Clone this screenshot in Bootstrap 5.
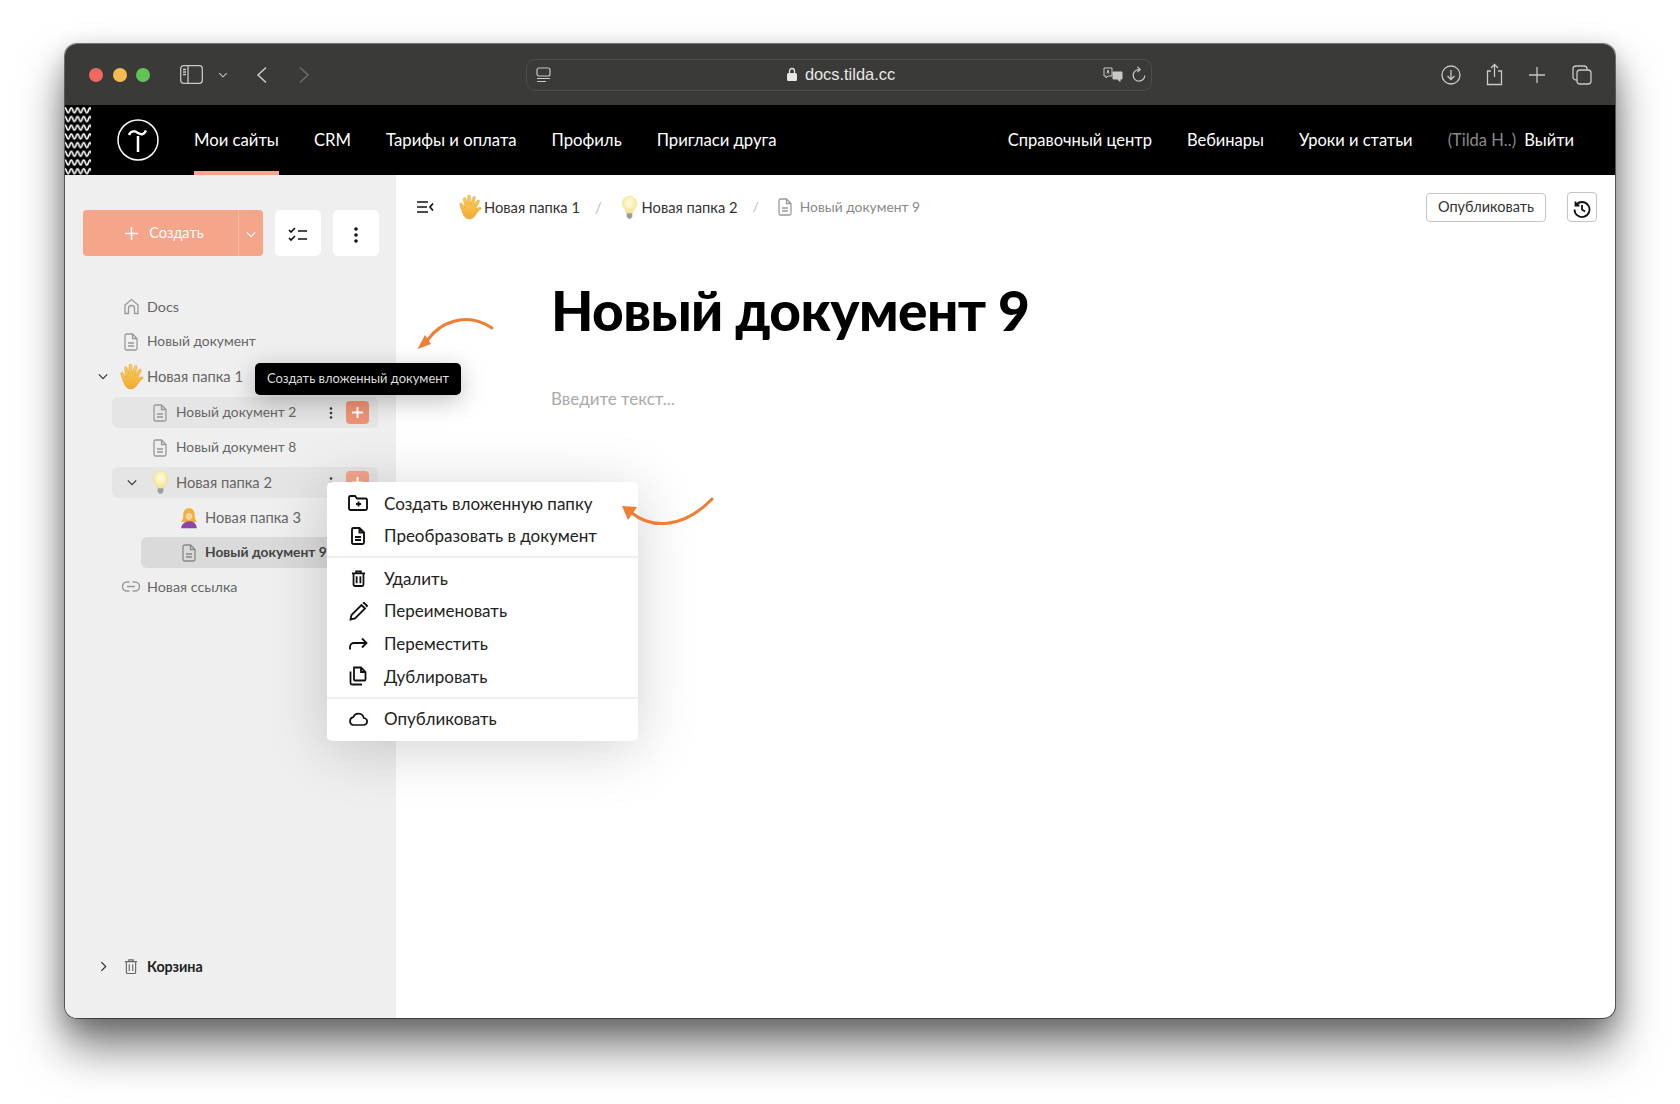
<!DOCTYPE html>
<html lang="ru">
<head>
    <meta charset="UTF-8">
    <title>docs.tilda.cc</title>
    <link href="https://cdn.jsdelivr.net/npm/bootstrap@5.3.2/dist/css/bootstrap.min.css" rel="stylesheet">
    <style>
        html, body { height: 1104px; }
        body { background: #fff; font-family: "Lato", "Noto Sans", sans-serif; color: #111; padding: 44px 0 0 65px; }
        .app-window { width: 1550px; height: 974px; border-radius: 12px; box-shadow: 0 0 0 1px rgba(0,0,0,.5), 0 30px 46px rgba(0,0,0,.5), 0 8px 24px rgba(0,0,0,.25); position: relative; }
        .win-frame { height: 100%; position: relative; border-radius: 12px; overflow: hidden; }

        .title-bar { height: 61px; background: #3a3a38; padding-left: 24px; color: #c8c8c6; flex: none; }
        .light { width: 14px; height: 14px; border-radius: 50%; margin-right: 9.500px; }
        .url-bar { width: 626px; height: 32px; border: 1px solid #4d4d4b; border-radius: 9px; margin-left: 216px; padding: 0 5px 0 9px; font-family: "Liberation Sans", sans-serif; font-size: 16.400px; color: #e8e8e6; }
        .url-center { flex: 1; justify-content: center; padding-left: 30px; }

        .top-nav { height: 70px; background: #000; flex: none; }
        .wave-strip { width: 26px; height: 70px; flex: none; }
        .top-link { color: #fff; font-size: 16.500px; line-height: 70px; height: 70px; text-decoration: none; white-space: nowrap; display: block; }
        .left-links .top-link { font-size: 16.700px; }
        .top-link.current { box-shadow: inset 0 -4px 0 #f4a58a; }
        .top-nav .nav { gap: 35px; }
        .muted-user { color: #8a8a8a; margin-right: 4px; }

        .side-panel { width: 331px; background: #efefef; padding: 35px 0 36px 18px; flex: none; }
        .create-group { width: 180px; height: 46px; }
        .create-group .btn { background: #f4a58a; color: #fff; border: 0; font-size: 14.500px; border-radius: 4px; }
        .create-group .btn:first-child { padding: 0 12px 0 19px; gap: 11px; }
        .create-group .btn + .btn { border-left: 1px solid #f7b8a2; flex: 0 0 25px; padding: 0; }
        .tool-btn { width: 46px; height: 46px; background: #fff; border: 0; border-radius: 5px; padding: 0; margin-left: 12px; }

        .doc-tree { margin-top: 35px; width: 295px; }
        .tree-row { height: 31px; margin-bottom: 4px; padding-left: 13px; border-radius: 6px; font-size: 14.300px; color: #666; white-space: nowrap; position: relative; }
        .tree-row.lvl-1 { margin-left: 29px; }
        .tree-row.lvl-2 { margin-left: 58px; }
        .tree-row.hovered { background: #e5e5e5; }
        .tree-row.picked { background: #dadada; color: #444; font-weight: 700; margin-bottom: 3px; }
        .tree-row.open-folder { margin-bottom: 5px; }
        .tree-row.sub-folder { margin-top: 4px; }
        .name-doc { font-size: 13.800px; }
        .name-folder { font-size: 14.700px; }
        .chev-slot { width: 14px; flex: none; line-height: 0; text-align: center; }
        .icon-slot { width: 18px; margin-left: 12px; margin-right: 7px; flex: none; display: flex; justify-content: center; }
        .row-tools { position: absolute; right: 9px; top: 4px; gap: 13px; }
        .add-mini { width: 23px; height: 23px; border-radius: 4px; background: #ee9374; color: #fff; }
        .add-mini.faded { background: #f4a58a; }
        .trash-row { height: 31px; margin-top: auto; padding-left: 13px; font-size: 14.300px; font-weight: 700; color: #222; }
        .thin-ic { stroke-width: 1.300; }
        .bold-ic { stroke-width: 1.900; }

        .hint-box { position: absolute; left: 190px; top: 319px; width: 206px; height: 32px; background: #000; color: #ddd; border-radius: 5px; font-size: 12.900px; box-shadow: 0 6px 24px rgba(0,0,0,.25); z-index: 5; }
        .tree-menu.dropdown-menu { position: absolute; display: block; left: 262px; top: 438px; width: 311px; height: 259px; padding: 5px 0 0; border: 0; border-radius: 5px; box-shadow: 0 8px 60px rgba(0,0,0,.18); z-index: 6; }
        .tree-menu .dropdown-item { height: 32.600px; padding: 0 0 0 19px; display: flex; align-items: center; font-size: 17px; color: #222; }
        .tree-menu .dropdown-divider { margin: 4px 0 4px; border-color: #efefef; border-width: 2px; }
        .menu-icon { width: 24px; margin-right: 14px; display: flex; justify-content: center; }

        .main-pane { position: relative; min-width: 0; }
        .crumb-bar { height: 30px; margin-top: 17px; padding: 0 18px 0 21px; }
        .crumb-bar .breadcrumb { margin: 0 0 0 24px; font-size: 14.700px; --bs-breadcrumb-item-padding-x: 15px; align-items: center; }
        .crumb-bar .breadcrumb-item { display: flex; align-items: center; gap: 4px; color: #333; }
        .crumb-bar .breadcrumb-item.active { font-size: 13.800px; color: #888; }
        .crumb-bar .breadcrumb-item + .breadcrumb-item::before { color: #bbb; }
        .hand-crumb { margin-right: -2px; }
        .publish-btn { width: 120px; height: 29px; padding: 0; font-size: 14.500px; border: 1px solid #c4c4c4; border-radius: 4px; color: #333; background: #fff; }
        .history-btn { width: 30px; height: 30px; padding: 0; border: 1px solid #c4c4c4; border-radius: 4px; background: #fff; margin-left: 21px; }
        .doc-title { font-size: 55px; font-weight: 900; line-height: 1; margin: 61px 0 0 155px; color: #000; letter-spacing: -.6px; }
        .doc-placeholder { font-size: 17px; color: #aaa; margin: 48px 0 0 155px; }
        .note-arrow { position: absolute; z-index: 7; overflow: visible; }
    </style>
</head>
<body>

<svg width="0" height="0" class="position-absolute">
    <defs>
        <pattern id="waves" width="12.500" height="8.700" patternUnits="userSpaceOnUse" y="1">
            <path d="M-3.125 4.300C-1.500 1.800 0 1.800 0 1.800C1.600 1.800 1.600 6.800 3.125 6.800S4.700 1.800 6.250 1.800 7.800 6.800 9.375 6.800 11 1.800 12.500 1.800 14 6.800 15.625 6.800" fill="none" stroke="#fff" stroke-width="1.700"/>
        </pattern>
        <radialGradient id="bulb-glow" cx=".5" cy=".4" r=".6">
            <stop offset="0" stop-color="#fffef0"/>
            <stop offset="1" stop-color="#f8e27e"/>
        </radialGradient>
        <linearGradient id="hand-shade" x1="0" y1="0" x2="0" y2="1">
            <stop offset="0" stop-color="#fbd25a"/>
            <stop offset="1" stop-color="#f1a935"/>
        </linearGradient>
        <symbol id="ic-doc" viewBox="0 0 14 18"><path d="M1 2.500A1.500 1.500 0 0 1 2.500 1H8.500L13 5.500V15.500A1.500 1.500 0 0 1 11.500 17H2.500A1.500 1.500 0 0 1 1 15.500ZM8.500 1V5.500H13M4 10H10M4 13H10" fill="none" stroke="currentColor"/></symbol>
        <symbol id="ic-trash" viewBox="0 0 16 18"><path d="M1 3.500H15M5.500 3.500V1.500H10.500V3.500M2.700 3.500V15.500A1.500 1.500 0 0 0 4.200 17H11.800A1.500 1.500 0 0 0 13.300 15.500V3.500M6 6.500V14M10 6.500V14" fill="none" stroke="currentColor"/></symbol>
        <symbol id="ic-down" viewBox="0 0 12 8"><path d="M1 1.500L6 6.500L11 1.500" fill="none" stroke="currentColor" stroke-width="1.400"/></symbol>
        <symbol id="em-hand" viewBox="0 0 24 26"><path d="M7 14L5.300 5.200C5 3.400 7.300 3 7.800 4.700L9.600 10.500L9.700 2.500C9.700.6 12.200.6 12.300 2.500L12.800 10.300L14.900 3.300C15.400 1.600 17.800 2.200 17.300 4L15.600 11.200L19.200 6.500C20.300 5.200 22.200 6.400 21.300 7.900L17.500 14.500C19 14.200 21 13 22.600 13.500 23.500 13.900 23.300 14.800 22.500 15.300 20 16.800 18.500 19.500 16.800 22 14.500 25.500 10 25.800 7.500 23.500 4.500 20.800 3.600 15.500 1.800 10.800 1.200 9 3.500 8.300 4.200 10Z" fill="url(#hand-shade)" stroke="#e29a2c" stroke-width=".5"/></symbol>
        <symbol id="em-bulb" viewBox="0 0 18 26"><path d="M9 1A7.700 7.700 0 0 0 1.300 8.700C1.300 12.500 4.800 14.500 5.800 19H12.200C13.200 14.500 16.700 12.500 16.700 8.700A7.700 7.700 0 0 0 9 1Z" fill="url(#bulb-glow)" stroke="#f1dc8b" stroke-width=".5"/><path d="M6 19.200H12V22.500L10.200 25H7.800L6 22.500Z" fill="#9c9c9c"/></symbol>
        <symbol id="em-woman" viewBox="0 0 22 26"><path d="M11 1C5 1 4 6 4 10C4 14 2.500 16.500 1.500 18H20.500C19.500 16.500 18 14 18 10C18 6 17 1 11 1Z" fill="#eeb13c"/><path d="M11 6.500C8.500 6.500 7 8.500 7 11S8.800 15.500 11 15.500 15 13.500 15 11 13.500 6.500 11 6.500Z" fill="#f9cf9f"/><path d="M1.500 25.500C1.500 20.500 5.500 18 11 17S20.500 20.500 20.500 25.500Z" fill="#8e45a8"/></symbol>
    </defs>
</svg>

<div class="app-window">
    <div class="win-frame d-flex flex-column">

        <div class="title-bar d-flex align-items-center">
            <span class="light" style="background:#ee6a5f"></span>
            <span class="light" style="background:#f5bd4f"></span>
            <span class="light" style="background:#61c454"></span>
            <svg style="margin-left:20px" width="23" height="19" viewBox="0 0 23 19" fill="none" stroke="#c8c8c6" stroke-width="1.300"><rect x=".7" y=".7" width="21.600" height="17.600" rx="3"/><path d="M8 .7V18.300M3 4.500H6M3 7H6M3 9.500H6"/></svg>
            <svg width="10" height="6" viewBox="0 0 12 8" style="color:#c8c8c6;margin-left:15px"><use href="#ic-down"/></svg>
            <svg width="12" height="18" viewBox="0 0 12 18" fill="none" stroke="#c8c8c6" stroke-width="1.600" style="margin-left:28px"><path d="M10 1.500L2 9L10 16.500"/></svg>
            <svg width="12" height="18" viewBox="0 0 12 18" fill="none" stroke="#6a6a68" stroke-width="1.600" style="margin-left:30px"><path d="M2 1.500L10 9L2 16.500"/></svg>

            <div class="url-bar d-flex align-items-center">
                <svg width="15" height="16" viewBox="0 0 15 16" fill="none" stroke="#c8c8c6" stroke-width="1.200"><rect x="1" y="1" width="13" height="8" rx="2"/><path d="M1 11.500H14M1 14.500H10"/></svg>
                <div class="url-center d-flex align-items-center gap-2">
                    <svg width="10" height="14" viewBox="0 0 10 14"><path d="M2.500 6V4A2.500 2.500 0 0 1 7.500 4V6" fill="none" stroke="#e8e8e6" stroke-width="1.300"/><rect y="6" width="10" height="8" rx="1.500" fill="#e8e8e6"/></svg>
                    <span>docs.tilda.cc</span>
                </div>
                <svg width="22" height="16" viewBox="0 0 22 16" fill="none" stroke="#c8c8c6" stroke-width="1"><path d="M2 1H10V9H6L4 11V9H2ZM5 6.500L6 3L7 6.500"/><path d="M11 5H20V12H18V14.500L15.500 12H11Z" fill="#c8c8c6"/></svg>
                <svg class="ms-2" width="14" height="17" viewBox="0 0 14 17" fill="none" stroke="#c8c8c6" stroke-width="1.200"><path d="M7 3.500A5.800 5.800 0 1 0 12.800 9.500M5.500 .8L8.200 3.500L5.500 6"/></svg>
            </div>

            <svg width="20" height="20" viewBox="0 0 20 20" fill="none" stroke="#c8c8c6" stroke-width="1.300" style="margin-left:289px"><circle cx="10" cy="10" r="9"/><path d="M10 5V14.500M6.500 11L10 14.500L13.500 11"/></svg>
            <svg width="17" height="23" viewBox="0 0 17 23" fill="none" stroke="#c8c8c6" stroke-width="1.300" style="margin-left:25px"><path d="M5 8H1.500V21.500H15.500V8H12M8.500 14V1.500M5 5L8.500 1.500L12 5"/></svg>
            <svg width="16" height="16" viewBox="0 0 16 16" fill="none" stroke="#c8c8c6" stroke-width="1.300" style="margin-left:26px"><path d="M8 0V16M0 8H16"/></svg>
            <svg width="20" height="20" viewBox="0 0 20 20" fill="none" stroke="#c8c8c6" stroke-width="1.300" style="margin-left:27px"><rect x="5" y="5" width="14" height="14" rx="3"/><path d="M5 15H4A3 3 0 0 1 1 12V4A3 3 0 0 1 4 1H12A3 3 0 0 1 15 4V5"/></svg>
        </div>

        <div class="top-nav d-flex align-items-center">
            <svg class="wave-strip"><rect width="26" height="70" fill="url(#waves)"/></svg>
            <svg width="42" height="42" viewBox="0 0 42 42" fill="none" stroke="#fff" stroke-width="1.500" style="margin-left:26px"><circle cx="21" cy="21" r="20"/><path d="M21 17V33" stroke-width="2.500"/><path d="M12 16C14 11 18 12 21 14S27 16 29 11.500" stroke-width="2.500"/></svg>
            <ul class="nav left-links" style="margin-left:35px">
                <li><a class="top-link current" href="#">Мои сайты</a></li>
                <li><a class="top-link" href="#">CRM</a></li>
                <li><a class="top-link" href="#">Тарифы и оплата</a></li>
                <li><a class="top-link" href="#">Профиль</a></li>
                <li><a class="top-link" href="#">Пригласи друга</a></li>
            </ul>
            <ul class="nav ms-auto" style="margin-right:41px">
                <li><a class="top-link" href="#">Справочный центр</a></li>
                <li><a class="top-link" href="#">Вебинары</a></li>
                <li><a class="top-link" href="#">Уроки и статьи</a></li>
                <li><a class="top-link" href="#"><span class="muted-user">(Tilda H..)</span> Выйти</a></li>
            </ul>
        </div>

        <div class="d-flex flex-grow-1" style="min-height:0">
            <aside class="side-panel d-flex flex-column">
                <div class="d-flex">
                    <div class="btn-group create-group">
                        <button class="btn d-flex align-items-center justify-content-center" type="button">
                            <svg width="13" height="13" viewBox="0 0 13 13" stroke="#fff" stroke-width="1.600"><path d="M6.500 0V13M0 6.500H13"/></svg>
                            <span>Создать</span>
                        </button>
                        <button class="btn" type="button"><svg width="10" height="7" viewBox="0 0 12 8"><use href="#ic-down"/></svg></button>
                    </div>
                    <button class="tool-btn" type="button"><svg width="20" height="16" viewBox="0 0 20 16" fill="none" stroke="#111" stroke-width="1.700"><path d="M1 3L3 5L7 1M1 11L3 13L7 9M10 4H19M10 12H19"/></svg></button>
                    <button class="tool-btn" type="button"><svg width="4" height="16" viewBox="0 0 4 16" fill="#111"><circle cx="2" cy="2" r="1.800"/><circle cx="2" cy="8" r="1.800"/><circle cx="2" cy="14" r="1.800"/></svg></button>
                </div>

                <div class="doc-tree">
                    <div class="tree-row d-flex align-items-center"><span class="chev-slot"></span><span class="icon-slot"><svg width="15" height="17" viewBox="0 0 15 16" fill="none" stroke="#999" stroke-width="1.300"><path d="M1 6.500L7.500 1L14 6.500V15H10.500V10A3 3 0 0 0 4.500 10V15H1Z"/></svg></span>Docs</div>
                    <div class="tree-row d-flex align-items-center"><span class="chev-slot"></span><span class="icon-slot" style="color:#999"><svg class="thin-ic" width="14" height="18"><use href="#ic-doc"/></svg></span><span class="name-doc">Новый документ</span></div>
                    <div class="tree-row open-folder d-flex align-items-center"><span class="chev-slot"><svg width="10" height="7" viewBox="0 0 12 8" style="color:#333"><use href="#ic-down"/></svg></span><span class="icon-slot"><svg class="flex-shrink-0" width="25" height="27"><use href="#em-hand"/></svg></span><span class="name-folder">Новая папка 1</span></div>
                    <div class="tree-row lvl-1 hovered d-flex align-items-center"><span class="chev-slot"></span><span class="icon-slot" style="color:#999"><svg class="thin-ic" width="14" height="18"><use href="#ic-doc"/></svg></span><span class="name-doc">Новый документ 2</span>
                        <div class="row-tools d-flex align-items-center"><svg width="4" height="12" viewBox="0 0 4 12" fill="#333"><circle cx="2" cy="1.500" r="1.300"/><circle cx="2" cy="6" r="1.300"/><circle cx="2" cy="10.500" r="1.300"/></svg><span class="add-mini d-flex align-items-center justify-content-center"><svg width="11" height="11" viewBox="0 0 11 11" stroke="#fff" stroke-width="2"><path d="M5.500 0V11M0 5.500H11"/></svg></span></div>
                    </div>
                    <div class="tree-row lvl-1 d-flex align-items-center"><span class="chev-slot"></span><span class="icon-slot" style="color:#999"><svg class="thin-ic" width="14" height="18"><use href="#ic-doc"/></svg></span><span class="name-doc">Новый документ 8</span></div>
                    <div class="tree-row lvl-1 hovered d-flex align-items-center"><span class="chev-slot"><svg width="10" height="7" viewBox="0 0 12 8" style="color:#333"><use href="#ic-down"/></svg></span><span class="icon-slot"><svg width="17" height="25"><use href="#em-bulb"/></svg></span><span class="name-folder">Новая папка 2</span>
                        <div class="row-tools d-flex align-items-center"><svg width="4" height="12" viewBox="0 0 4 12" fill="#333"><circle cx="2" cy="1.500" r="1.300"/><circle cx="2" cy="6" r="1.300"/><circle cx="2" cy="10.500" r="1.300"/></svg><span class="add-mini faded d-flex align-items-center justify-content-center"><svg width="11" height="11" viewBox="0 0 11 11" stroke="#fff" stroke-width="2"><path d="M5.500 0V11M0 5.500H11"/></svg></span></div>
                    </div>
                    <div class="tree-row lvl-2 sub-folder d-flex align-items-center"><span class="chev-slot"></span><span class="icon-slot"><svg width="20" height="24"><use href="#em-woman"/></svg></span><span class="name-folder">Новая папка 3</span></div>
                    <div class="tree-row lvl-2 picked d-flex align-items-center"><span class="chev-slot"></span><span class="icon-slot" style="color:#888"><svg class="thin-ic" width="14" height="18"><use href="#ic-doc"/></svg></span><span class="name-doc">Новый документ 9</span></div>
                    <div class="tree-row d-flex align-items-center"><span class="chev-slot"></span><span class="icon-slot"><svg width="18" height="11" viewBox="0 0 18 11" fill="none" stroke="#999" stroke-width="1.400"><path d="M7.500 1H5A4 4 0 0 0 5 10H7.500M10.500 1H13A4 4 0 0 1 13 10H10.500M5 5.500H13"/></svg></span>Новая ссылка</div>
                </div>

                <div class="trash-row d-flex align-items-center">
                    <span class="chev-slot"><svg width="7" height="11" viewBox="0 0 8 12" fill="none" stroke="#333" stroke-width="1.400"><path d="M1.500 1L6.500 6L1.500 11"/></svg></span>
                    <span class="icon-slot" style="color:#666"><svg class="thin-ic" width="14" height="17"><use href="#ic-trash"/></svg></span>Корзина
                </div>
            </aside>

            <main class="main-pane flex-grow-1">
                <div class="crumb-bar d-flex align-items-center">
                    <svg width="17" height="12" viewBox="0 0 17 12" fill="none" stroke="#111" stroke-width="1.700"><path d="M0 1H11M0 6H10M0 11H11M16 2.500L13 6L16 9.500"/></svg>
                    <ol class="breadcrumb">
                        <li class="breadcrumb-item"><svg class="hand-crumb" width="24" height="26"><use href="#em-hand"/></svg>Новая папка 1</li>
                        <li class="breadcrumb-item"><svg width="17" height="25"><use href="#em-bulb"/></svg>Новая папка 2</li>
                        <li class="breadcrumb-item active" aria-current="page"><svg class="thin-ic me-1" width="14" height="18" style="color:#999"><use href="#ic-doc"/></svg>Новый документ 9</li>
                    </ol>
                    <button class="btn publish-btn ms-auto" type="button">Опубликовать</button>
                    <button class="btn history-btn" type="button"><svg width="18" height="18" viewBox="0 0 18 18" fill="none" stroke="#111" stroke-width="1.800"><path d="M3 5A7.500 7.500 0 1 1 1.500 9.500M2.500 1.500V5.500H6.500M9 5V9.500L12 11.500"/></svg></button>
                </div>
                <h1 class="doc-title">Новый документ 9</h1>
                <div class="doc-placeholder">Введите текст...</div>
            </main>
        </div>

        <div class="hint-box d-flex align-items-center justify-content-center">Создать вложенный документ</div>

        <div class="dropdown-menu show tree-menu">
            <a class="dropdown-item" href="#"><span class="menu-icon"><svg width="20" height="16" viewBox="0 0 20 16" fill="none" stroke="#111" stroke-width="1.900"><path d="M1 2.500A1.500 1.500 0 0 1 2.500 1H7L9 3.500H17.500A1.500 1.500 0 0 1 19 5V13.500A1.500 1.500 0 0 1 17.500 15H2.500A1.500 1.500 0 0 1 1 13.500ZM10.500 6.500V11.500M8 9H13"/></svg></span>Создать вложенную папку</a>
            <a class="dropdown-item" href="#"><span class="menu-icon" style="color:#111"><svg class="bold-ic" width="14" height="18"><use href="#ic-doc"/></svg></span>Преобразовать в документ</a>
            <hr class="dropdown-divider">
            <a class="dropdown-item" href="#"><span class="menu-icon" style="color:#111"><svg class="bold-ic" width="15" height="17"><use href="#ic-trash"/></svg></span>Удалить</a>
            <a class="dropdown-item" href="#"><span class="menu-icon"><svg width="19" height="19" viewBox="0 0 19 19" fill="none" stroke="#111" stroke-width="1.800"><path d="M1.500 17.500L2.500 13L12.500 3L16 6.500L6 16.500ZM14 1.500L15 .8L18 3.800L17.300 5"/></svg></span>Переименовать</a>
            <a class="dropdown-item" href="#"><span class="menu-icon"><svg width="19" height="13" viewBox="0 0 19 13" fill="none" stroke="#111" stroke-width="1.800"><path d="M1 12.500V10A4 4 0 0 1 5 6H17.500M13 1.500L17.500 6L13 10.500"/></svg></span>Переместить</a>
            <a class="dropdown-item" href="#"><span class="menu-icon"><svg width="18" height="20" viewBox="0 0 18 20" fill="none" stroke="#111" stroke-width="1.800"><path d="M5 1.500H12L16.500 6V13.500A1 1 0 0 1 15.500 14.500H6A1 1 0 0 1 5 13.500ZM12 1.500V6H16.500M1.500 5.500V17A1.500 1.500 0 0 0 3 18.500H13"/></svg></span>Дублировать</a>
            <hr class="dropdown-divider">
            <a class="dropdown-item" href="#"><span class="menu-icon"><svg width="20" height="14" viewBox="0 0 20 14" fill="none" stroke="#111" stroke-width="1.700"><path d="M5 13H15.500A3.500 3.500 0 0 0 15.800 6A5.500 5.500 0 0 0 5.300 5.200A4 4 0 0 0 5 13Z"/></svg></span>Опубликовать</a>
        </div>

        <svg class="note-arrow" style="left:350px;top:268px" width="82" height="42" viewBox="0 0 82 42" fill="none">
            <path d="M13 27.500C24 12 50 -2 77 16" stroke="#ef7d33" stroke-width="3" stroke-linecap="round"/>
            <path d="M2.500 37L10 23L16 32Z" fill="#ef7d33"/>
        </svg>
        <svg class="note-arrow" style="left:555px;top:450px" width="96" height="46" viewBox="0 0 96 46" fill="none">
            <path d="M12 19C30 34 62 36 92 5" stroke="#ef7d33" stroke-width="3" stroke-linecap="round"/>
            <path d="M2 12L17 13L8 26Z" fill="#ef7d33"/>
        </svg>
    </div>
</div>

</body>
</html>
